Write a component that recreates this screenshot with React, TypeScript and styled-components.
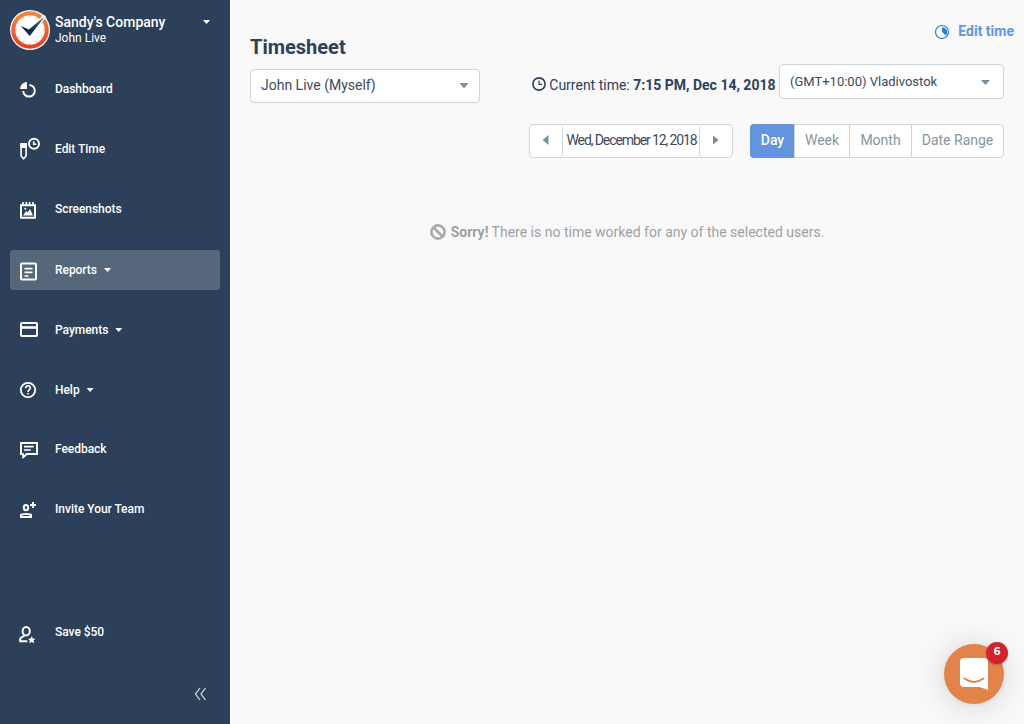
import React from "react";
import styled, { createGlobalStyle, css } from "styled-components";

const GlobalStyle = createGlobalStyle`
  * { box-sizing: border-box; }
  body { margin: 0; background: #f9f9f9; font-family: Roboto, "Liberation Sans", sans-serif; color: #2d405a; }
  button { font-family: inherit; margin: 0; cursor: pointer; }
`;

const Page = styled.div`
  display: flex;
  height: 724px;
  overflow: hidden;
`;

const Sidebar = styled.aside`
  display: flex;
  flex-direction: column;
  flex: 0 0 230px;
  padding: 10px 10px 0;
  background: #2c405a;
  color: #fff;
`;

const Company = styled.header`
  display: flex;
  height: 40px;
  margin-bottom: 19px;
`;

const CompanyText = styled.div`
  flex: 1;
  padding: 3px 0 0 5px;
`;

const CompanyName = styled.div`
  font-size: 14px;
  font-weight: 500;
  line-height: 18px;
`;

const UserName = styled.div`
  font-size: 12px;
  line-height: 14px;
`;

const Caret = styled.span`
  width: 7px;
  height: 4px;
  margin-left: 7px;
  background: #fff;
  clip-path: polygon(0 0, 100% 0, 50% 100%);
`;

const CompanyCaret = styled(Caret)`
  margin: 10px 10px 0 0;
`;

const Nav = styled.nav`
  display: flex;
  flex-direction: column;
`;

const NavItem = styled.a<{ $active?: boolean; $before?: number }>`
  display: flex;
  align-items: center;
  height: 40px;
  margin-top: ${(p) => p.$before ?? 20}px;
  padding-left: 8px;
  border-radius: 3px;
  font-size: 12px;
  font-weight: 500;
  letter-spacing: -0.04px;
  ${(p) => p.$active && css`background: #56677b;`}
`;

const NavIcon = styled.svg`
  width: 26px;
  height: 40px;
  margin-right: 11px;
  fill: none;
  stroke: #fff;
  stroke-width: 2;
`;

const Collapse = styled.div`
  display: flex;
  justify-content: flex-end;
  padding: 35px 13px 0 0;
`;

const Main = styled.main`
  flex: 1;
  display: flex;
  flex-direction: column;
  padding: 20px 20px 0;
`;

const Heading = styled.div`
  display: flex;
  justify-content: space-between;
  height: 44px;
`;

const Title = styled.h1`
  margin: 15px 0 0;
  font-size: 20px;
  font-weight: 700;
  line-height: 24px;
`;

const EditLink = styled.a`
  display: flex;
  align-items: center;
  gap: 8px;
  height: 22px;
  margin-right: -10px;
  color: #6394e0;
  font-size: 14px;
  font-weight: 700;
`;

const Filters = styled.div`
  display: flex;
  height: 60px;
`;

const Select = styled.button<{ $width: number; $size: number; $top?: number }>`
  display: flex;
  align-items: center;
  justify-content: space-between;
  width: ${(p) => p.$width}px;
  height: ${(p) => (p.$top ? 34 : 35)}px;
  margin-top: ${(p) => p.$top ?? 0}px;
  padding: 0 ${(p) => (p.$top ? 10 : 13)}px ${(p) => (p.$top ? 2 : 1)}px 10px;
  border: 1px solid #ccd7db;
  border-radius: 4px;
  background: #fff;
  color: #3d4a5c;
  font-size: ${(p) => p.$size}px;
`;

const arrowShapes = {
  down: css`width: 10px; height: 6px; margin-top: 1px; clip-path: polygon(0 0, 100% 0, 50% 100%);`,
  left: css`width: 6px; height: 10px; clip-path: polygon(100% 0, 100% 100%, 0 50%);`,
  right: css`width: 6px; height: 10px; clip-path: polygon(0 0, 100% 50%, 0 100%);`,
};

const Arrow = styled.span<{ $dir: "down" | "left" | "right"; $small?: boolean }>`
  background: #78909c;
  ${(p) => arrowShapes[p.$dir]}
  ${(p) => p.$small && css`width: 9px; height: 5px; margin-top: 3px;`}
`;

const CurrentTime = styled.div`
  display: flex;
  align-items: center;
  height: 42px;
  margin: 0 3.5px 0 auto;
  font-size: 14px;
  white-space: pre;
  svg { margin: 0 3px 2px 0; }
  b { font-weight: 700; }
`;

const Controls = styled.div`
  display: flex;
  justify-content: flex-end;
  gap: 17px;
  height: 34px;
`;

const DatePicker = styled.div`
  display: flex;
  width: 204px;
  border: 1px solid #ccd7db;
  border-radius: 4px;
  background: #fff;
`;

const Step = styled.button<{ $side: "left" | "right" }>`
  display: flex;
  align-items: center;
  justify-content: center;
  flex: 0 0 33px;
  padding: 0 1px 2px 0;
  border: 0 solid #ccd7db;
  border-radius: 4px;
  background: none;
  ${(p) => (p.$side === "left" ? css`border-right-width: 1px;` : css`border-left-width: 1px;`)}
`;

const DateText = styled.span`
  flex: 1;
  min-width: 0;
  padding-left: 3.5px;
  line-height: 31px;
  font-size: 14px;
  letter-spacing: -1.1px;
  white-space: nowrap;
  color: #3d4a5c;
`;

const Ranges = styled.div`
  display: flex;
  border: 1px solid #ccd7db;
  border-radius: 4px;
  background: #fff;
`;

const Range = styled.button<{ $width: number; $active?: boolean }>`
  width: ${(p) => p.$width}px;
  padding: 0 0 2px;
  border: 0;
  border-left: 1px solid #ccd7db;
  background: none;
  color: #84979f;
  font-size: 14px;
  white-space: nowrap;
  ${(p) =>
    p.$active &&
    css`
      margin: -1px 0 -1px -1px;
      padding-left: 1px;
      border-left: 0;
      border-radius: 4px 0 0 4px;
      background: #6394e0;
      color: #fff;
      font-weight: 500;
    `}
`;

const Empty = styled.p`
  display: flex;
  align-items: center;
  justify-content: center;
  margin: 64px 0 0;
  height: 20px;
  color: #a0a0a0;
  font-size: 14px;
  white-space: pre;
  svg { margin-right: 5px; }
`;

const Launcher = styled.button`
  position: fixed;
  right: 20px;
  bottom: 20px;
  display: flex;
  align-items: center;
  justify-content: center;
  width: 60px;
  height: 60px;
  padding: 0;
  border: 0;
  border-radius: 50%;
  background: #e28349;
  box-shadow: 0 1px 6px rgba(0, 0, 0, 0.06), 0 2px 32px rgba(0, 0, 0, 0.16);
`;

const Badge = styled.span`
  position: absolute;
  top: -2px;
  right: -4px;
  width: 22px;
  height: 22px;
  border-radius: 50%;
  background: #d4232b;
  box-shadow: 0 1px 2px rgba(0, 0, 0, 0.25);
  color: #fff;
  font: 700 12px/20px "DejaVu Sans", sans-serif;
  font-size: 11px;
  text-align: center;
`;

const Logo = () => (
  <svg width="40" height="40" viewBox="0 0 40 40">
    <defs>
      <linearGradient id="rim" x1="0" y1="0" x2="0" y2="1">
        <stop offset="0" stopColor="#f58a3c" />
        <stop offset="1" stopColor="#ea3a22" />
      </linearGradient>
      <linearGradient id="hand" x1="0" y1="1" x2="1" y2="0">
        <stop offset="0.3" stopColor="#14284e" />
        <stop offset="1" stopColor="#2a6aa8" />
      </linearGradient>
    </defs>
    <circle cx="20" cy="20" r="20" fill="#fff" />
    <circle cx="20" cy="20" r="18.8" fill="url(#rim)" />
    <circle cx="20" cy="20" r="14.8" fill="#fff" />
    {Array.from({ length: 12 }, (_, i) => (
      <path key={i} d="M20 5v2" stroke="#f08a60" strokeWidth="0.8" transform={`rotate(${i * 30} 20 20)`} />
    ))}
    <path d="M26.5 12L33.8 4.5L36.2 7L30.5 14z" fill="#fff" />
    <path d="M10.5 15.8L18.8 19.6L35 6.2L19.8 26z" fill="url(#hand)" />
  </svg>
);

type Item = { label: string; icon: React.ReactNode; caret?: boolean; active?: boolean; before?: number };

const items: Item[] = [
  {
    label: "Dashboard",
    before: 0,
    icon: (
      <>
        <path d="M11.5 16A5.8 5.8 0 1 1 5.2 22" />
        <path d="M2 20A7 7 0 0 1 9 13V20z" fill="#fff" stroke="none" />
      </>
    ),
  },
  {
    label: "Edit Time",
    icon: (
      <>
        <circle cx="16" cy="14.7" r="5" />
        <path d="M15.7 12.2V15.3H18.4" strokeWidth="1.6" />
        <path d="M3.1 15V27L5.6 29.7L8.1 27V15z" strokeWidth="1.6" />
        <path d="M2.4 14H8.9V19H2.4z" fill="#fff" stroke="none" />
      </>
    ),
  },
  {
    label: "Screenshots",
    icon: (
      <>
        <path d="M3 16.2H17V28.8H3z" />
        <path d="M5 13V16M8.3 13V16M11.6 13V16M15 13V16" strokeWidth="1.7" />
        <path d="M5 26.5L8.2 22L9.5 23.6L12 20L15 26.5z" fill="#fff" stroke="none" />
        <circle cx="7.3" cy="19.7" r="1" fill="#fff" stroke="none" />
      </>
    ),
  },
  {
    label: "Reports",
    caret: true,
    active: true,
    before: 21,
    icon: (
      <>
        <rect x="3" y="13.5" width="15" height="16" rx="1" />
        <path d="M6.5 18.7H14.5M6.5 22.4H14.5M6.5 26H10.5" strokeWidth="1.7" />
      </>
    ),
  },
  {
    label: "Payments",
    caret: true,
    icon: (
      <>
        <rect x="3" y="13" width="16" height="13" rx="1" />
        <path d="M3 17.5H19" strokeWidth="2.6" />
      </>
    ),
  },
  {
    label: "Help",
    caret: true,
    icon: (
      <>
        <circle cx="10" cy="20" r="7.2" strokeWidth="1.8" />
        <path d="M7.7 18.2C7.7 15 12.3 15 12.3 18C12.3 20 10 19.8 10 22M10 23V24.5" strokeWidth="1.6" />
      </>
    ),
  },
  {
    label: "Feedback",
    before: 19,
    icon: (
      <>
        <path d="M3 14H19V25H8.7L5.3 28L4.8 25H3z" />
        <path d="M6 17.6H15.7M6 21H12.8" strokeWidth="1.6" />
      </>
    ),
  },
  {
    label: "Invite Your Team",
    icon: (
      <>
        <ellipse cx="8" cy="18.6" rx="2.2" ry="2.7" />
        <path d="M3 28V26Q3.5 25 8 25Q12.5 25 13 26V28z" />
        <path d="M15 13V19M12 16H18" />
      </>
    ),
  },
  {
    label: "Save $50",
    before: 83,
    icon: (
      <>
        <path d="M9.3 29.2H2.2V27Q2.5 25.4 6.6 23.6" />
        <ellipse cx="8.2" cy="19.2" rx="3.6" ry="4.2" />
        <path d="M13.7 24.5L14.7 26.8L17 27L15.3 28.5L15.8 31L13.7 29.7L11.6 31L12.1 28.5L10.4 27L12.7 26.8z" fill="#fff" stroke="#fff" strokeWidth=".4" />
      </>
    ),
  },
];

export default function App() {
  return (
    <Page>
      <GlobalStyle />
      <Sidebar>
        <Company>
          <Logo />
          <CompanyText>
            <CompanyName>Sandy's Company</CompanyName>
            <UserName>John Live</UserName>
          </CompanyText>
          <CompanyCaret />
        </Company>
        <Nav>
          {items.map((it) => (
            <NavItem key={it.label} $active={it.active} $before={it.before}>
              <NavIcon viewBox="0 0 26 40">{it.icon}</NavIcon>
              {it.label}
              {it.caret && <Caret />}
            </NavItem>
          ))}
        </Nav>
        <Collapse>
          <svg width="13" height="14" viewBox="0 0 13 14" fill="none" stroke="#dfe4ea" strokeWidth="1.2">
            <path d="M6 1L1.5 7L6 13M11.5 1L7 7L11.5 13" />
          </svg>
        </Collapse>
      </Sidebar>
      <Main>
        <Heading>
          <Title>Timesheet</Title>
          <EditLink>
            <svg width="16" height="16" viewBox="0 0 16 16">
              <circle cx="8" cy="9" r="6.5" fill="#fff" stroke="#2f80c8" strokeWidth="1.2" />
              <path d="M8 4.2A4.9 4.9 0 0 1 11.8 12.5L8 9z" fill="#2f80c8" />
            </svg>
            Edit time
          </EditLink>
        </Heading>
        <Filters>
          <Select $width={230} $size={14} $top={5}>
            John Live (Myself)
            <Arrow $dir="down" />
          </Select>
          <CurrentTime>
            <svg width="14" height="14" viewBox="0 0 14 14" fill="none" stroke="#2d405a">
              <circle cx="7" cy="7" r="6.1" strokeWidth="1.6" />
              <path d="M7 3.5V7.4H10" strokeWidth="1.2" />
            </svg>
            Current time: <b>7:15 PM, Dec 14, 2018</b>
          </CurrentTime>
          <Select $width={225} $size={13}>
            (GMT+10:00) Vladivostok
            <Arrow $dir="down" $small />
          </Select>
        </Filters>
        <Controls>
          <DatePicker>
            <Step $side="left" aria-label="Previous day"><Arrow $dir="left" /></Step>
            <DateText>Wed, December 12, 2018</DateText>
            <Step $side="right" aria-label="Next day"><Arrow $dir="right" /></Step>
          </DatePicker>
          <Ranges>
            <Range $width={44} $active>Day</Range>
            <Range $width={55}>Week</Range>
            <Range $width={62}>Month</Range>
            <Range $width={92}>Date Range</Range>
          </Ranges>
        </Controls>
        <Empty>
          <svg width="16" height="16" viewBox="0 0 16 16" fill="none" stroke="#a9a9a9" strokeWidth="2.6">
            <circle cx="8" cy="8" r="6.6" />
            <path d="M3.5 3.5L12.5 12.5" />
          </svg>
          <b>Sorry!</b> There is no time worked for any of the selected users.
        </Empty>
      </Main>
      <Launcher aria-label="Messages">
        <svg width="28" height="32" viewBox="0 0 28 32">
          <path d="M28 32s-4.7-1.9-8.5-3H3.4C1.5 29 0 27.5 0 25.6V3.4C0 1.5 1.5 0 3.4 0h21.2C26.5 0 28 1.5 28 3.4z" fill="#fff" />
          <path d="M4.5 20.5Q14 27.3 23.5 20.5" fill="none" stroke="#e28349" strokeWidth="2" strokeLinecap="round" />
        </svg>
        <Badge>6</Badge>
      </Launcher>
    </Page>
  );
}
